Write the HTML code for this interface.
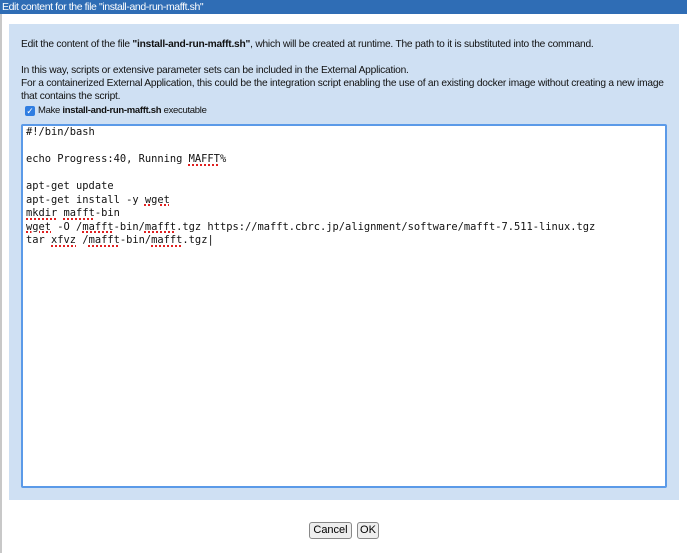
<!DOCTYPE html>
<html><head><style>
body{margin:0;width:687px;height:553px;background:#fff;position:relative;overflow:hidden;font-family:"Liberation Sans",Arial,sans-serif;}
#title{position:absolute;left:0;top:0;width:687px;height:14px;background:#2f6db5;color:#fff;font-size:10.5px;letter-spacing:-0.4px;line-height:14px;padding-left:2px;box-sizing:border-box;white-space:nowrap;}
#lb{position:absolute;left:0;top:14px;width:2px;height:539px;background:#c8c8c8;}
#panel{position:absolute;left:9px;top:24px;width:670px;height:476px;background:#cfe0f3;}
.p{position:absolute;left:21px;font-size:10.2px;letter-spacing:-0.22px;color:#111;line-height:13px;white-space:nowrap;}
#ta{position:absolute;left:21px;top:124px;width:646px;height:364px;box-sizing:border-box;border:2px solid #5b9ae8;border-radius:2px;background:#fff;font-family:"DejaVu Sans Mono","Liberation Mono",monospace;font-size:10.4px;line-height:13.5px;padding:0 3px;white-space:pre;color:#111;}
.u{text-decoration:underline dotted #e02020;text-decoration-thickness:2px;text-underline-offset:2px;}
.btn{position:absolute;top:522px;height:17px;border:1px solid #888;border-radius:3px;background:#eee;font-size:11px;line-height:15px;text-align:center;box-sizing:border-box;}
#cb{position:absolute;left:25px;top:106px;width:10px;height:10px;background:#2f7de1;border-radius:2px;color:#fff;font-size:9px;line-height:10px;text-align:center;}
</style></head><body>
<div id="title">Edit content for the file "install-and-run-mafft.sh"</div>
<div id="lb"></div>
<div id="panel"></div>
<div class="p" style="top:38px">Edit the content of the file <b>"install-and-run-mafft.sh"</b>, which will be created at runtime. The path to it is substituted into the command.</div>
<div class="p" style="top:64px">In this way, scripts or extensive parameter sets can be included in the External Application.</div>
<div class="p" style="top:77px">For a containerized External Application, this could be the integration script enabling the use of an existing docker image without creating a new image</div>
<div class="p" style="top:90px">that contains the script.</div>
<div id="cb">✓</div>
<div class="p" style="top:104px;left:38px;font-size:9.5px;letter-spacing:-0.3px">Make <b>install-and-run-mafft.sh</b> executable</div>
<div id="ta">#!/bin/bash

echo Progress:40, Running <span class="u">MAFFT</span>%

apt-get update
apt-get install -y <span class="u">wget</span>
<span class="u">mkdir</span> <span class="u">mafft</span>-bin
<span class="u">wget</span> -O /<span class="u">mafft</span>-bin/<span class="u">mafft</span>.tgz https://mafft.cbrc.jp/alignment/software/mafft-7.511-linux.tgz
tar <span class="u">xfvz</span> /<span class="u">mafft</span>-bin/<span class="u">mafft</span>.tgz|</div>
<div class="btn" style="left:309px;width:43px">Cancel</div>
<div class="btn" style="left:357px;width:22px">OK</div>
</body></html>
